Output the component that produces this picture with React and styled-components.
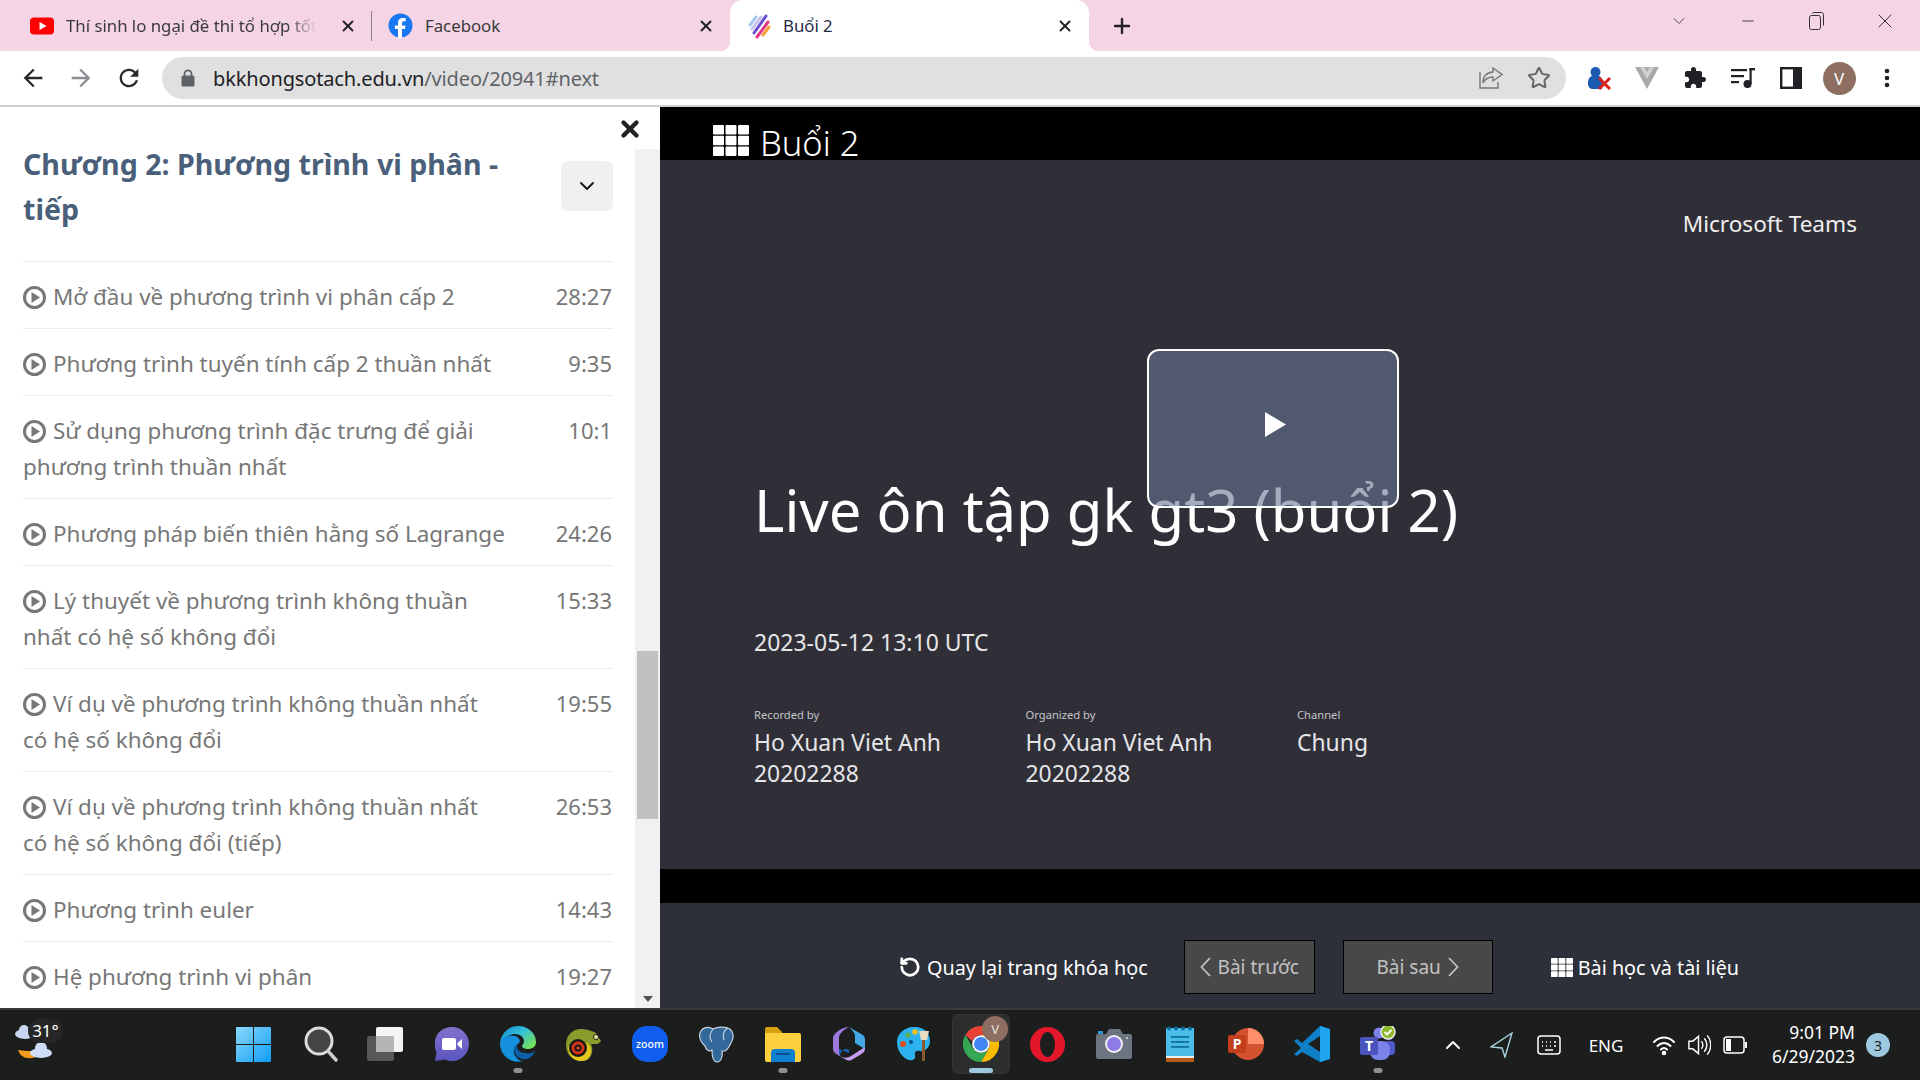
import styled, { createGlobalStyle } from "styled-components";
import { ChevronDown, ChevronUp, X, Plus, Minus, Star, RotateCcw } from "lucide-react";

const FONT = `"Noto Sans", "Open Sans", Arial, sans-serif`;

const GlobalStyle = createGlobalStyle`
  html, body { margin: 0; padding: 0; background: #fff; }
  body { font-family: ${FONT}; width: 1920px; height: 1080px; overflow: hidden; }
  * { box-sizing: border-box; }
`;

const Screen = styled.div`
  width: 1920px;
  height: 1080px;
  display: flex;
  flex-direction: column;
  overflow: hidden;
`;

/* browser chrome */
const TabStrip = styled.div`
  height: 51px;
  background: #f5d5e5;
  display: flex;
  padding-left: 15px;
  align-items: stretch;
`;

const Tab = styled.div`
  position: relative;
  width: ${(p) => p.$w}px;
  display: flex;
  align-items: center;
  padding: 0 15px 0 ${(p) => p.$pad || 15}px;
  gap: 12px;
  font-size: 16.8px;
  color: ${(p) => (p.$active ? "#1f2a44" : "#3a3a3a")};
  background: ${(p) => (p.$active ? "#fff" : "transparent")};
  border-radius: ${(p) => (p.$active ? "13px 13px 0 0" : "0")};
  ${(p) => p.$sep && `
    &::after {
      content: "";
      position: absolute;
      right: 0;
      top: 11px;
      height: 30px;
      width: 1px;
      background: #8a8088;
    }
  `}
  ${(p) => p.$active && `
    &::before, &::after {
      content: "";
      position: absolute;
      bottom: 0;
      width: 10px;
      height: 10px;
    }
    &::before { left: -10px; background: radial-gradient(circle at 0 0, transparent 10px, #fff 10.5px); }
    &::after { right: -10px; background: radial-gradient(circle at 100% 0, transparent 10px, #fff 10.5px); }
  `}
`;

const TabLabel = styled.span`
  flex: 1;
  white-space: nowrap;
`;

const FadedText = styled.span`
  display: inline-block;
  -webkit-mask-image: linear-gradient(90deg, #000 88%, transparent 100%);
  mask-image: linear-gradient(90deg, #000 88%, transparent 100%);
`;

const TabClose = styled.span`
  display: flex;
  color: #222;
`;

const NewTab = styled.div`
  width: 46px;
  margin-left: 10px;
  display: flex;
  align-items: center;
  justify-content: center;
  color: #222;
`;

const WindowControls = styled.div`
  margin-left: auto;
  display: flex;
  align-items: flex-start;
  padding-top: 10px;
  padding-right: 1px;
  color: #333;
`;

const WinButton = styled.span`
  width: 68.5px;
  height: 22px;
  display: flex;
  align-items: center;
  justify-content: center;
`;

const Toolbar = styled.div`
  height: 56px;
  background: #fff;
  border-bottom: 2px solid #cfcfcf;
  display: flex;
  align-items: center;
  padding: 0 9px 0 9px;
`;

const NavButton = styled.span`
  width: 48px;
  display: flex;
  justify-content: center;
  color: ${(p) => (p.$muted ? "#8a8d91" : "#2a2a2a")};
`;

const Address = styled.div`
  width: 1404px;
  margin-left: 9px;
  height: 42px;
  border-radius: 21px;
  background: #e0e0e0;
  display: flex;
  align-items: center;
  padding: 0 3px 0 19px;
  font-size: 20px;
  color: #5f6368;
`;

const Url = styled.span`
  margin-left: 18px;
  flex: 1;
  letter-spacing: -0.14px;
  b { font-weight: 400; color: #202124; }
`;

const AddressAction = styled.span`
  width: 48px;
  display: flex;
  justify-content: center;
  color: #666;
`;

const Extensions = styled.div`
  display: flex;
  align-items: center;
  margin-left: 9px;
`;

const ExtSlot = styled.span`
  width: 48px;
  display: flex;
  justify-content: center;
`;

const Avatar = styled.span`
  width: 33px;
  height: 33px;
  border-radius: 50%;
  background: #8d6e60;
  color: #fff;
  font-size: 17px;
  display: flex;
  align-items: center;
  justify-content: center;
`;

/* page */
const Page = styled.div`
  flex: 1;
  display: flex;
  min-height: 0;
`;

const Sidebar = styled.aside`
  position: relative;
  width: 660px;
  background: #fff;
  display: flex;
  overflow: hidden;
`;

const CloseBar = styled.div`
  position: absolute;
  left: 0;
  top: 0;
  width: 660px;
  height: 42px;
  z-index: 1;
  display: flex;
  justify-content: flex-end;
  padding: 9px 17px 0 0;
  color: #222;
`;

const ListPane = styled.div`
  width: 635px;
  padding: 34px 22px 0 23px;
  position: relative;
`;

const ChapterHead = styled.div`
  display: flex;
  align-items: flex-start;
  justify-content: space-between;
  padding-bottom: 30px;
  position: relative;
  z-index: 2;
`;

const ChapterTitle = styled.h2`
  margin: 0;
  width: 500px;
  font-size: 28.6px;
  line-height: 45px;
  font-weight: 700;
  color: #4a5f7a;
`;

const Toggle = styled.span`
  width: 52px;
  height: 50px;
  margin-top: 20px;
  border-radius: 6px;
  background: #f0f0f0;
  display: flex;
  align-items: center;
  justify-content: center;
  color: #111;
`;

const Row = styled.div`
  display: flex;
  justify-content: space-between;
  border-top: 1px solid #ececec;
  padding: 16px 1px 14px 0;
  font-size: 22px;
  line-height: 36px;
  color: #777;
`;

const RowTitle = styled.span`
  white-space: pre-line;
  font-size: 22.45px;
  margin: 1px 0 -1px;
  svg { vertical-align: -4px; margin-right: 7px; }
`;

const RowTime = styled.span`
  white-space: nowrap;
`;

const Track = styled.div`
  width: 25px;
  margin-top: 42px;
  background: #f1f1f1;
  display: flex;
  flex-direction: column;
  align-items: center;
  padding-bottom: 6px;
`;

const Thumb = styled.div`
  width: 21px;
  height: 168px;
  margin-top: 502px;
  background: #c1c1c1;
`;

const TrackArrow = styled.div`
  margin-top: auto;
  width: 0;
  height: 0;
  border-left: 5px solid transparent;
  border-right: 5px solid transparent;
  border-top: 6px solid #505050;
`;

const Player = styled.main`
  flex: 1;
  display: flex;
  flex-direction: column;
  background: #000;
`;

const PlayerTitle = styled.div`
  height: 53px;
  padding: 18px 0 0 53px;
  display: flex;
  gap: 11px;
  align-items: flex-start;
  color: #fff;
  font-size: 34.5px;
  line-height: 36px;
  font-weight: 300;
`;

const Stage = styled.section`
  position: relative;
  height: 709px;
  background: #302f38;
  color: #f4f4f6;
  padding: 49px 63px 0 94px;
  display: flex;
  flex-direction: column;
`;

const Brand = styled.div`
  align-self: flex-end;
  font-size: 22.6px;
  line-height: 30px;
  color: #eee;
`;

const Title = styled.h1`
  margin: 233px 0 0;
  font-size: 58px;
  line-height: 76px;
  font-weight: 400;
  color: #fff;
  white-space: nowrap;
`;

const DateLine = styled.div`
  margin-top: 79px;
  font-size: 23px;
  line-height: 30px;
  color: #e6e6e8;
`;

const Meta = styled.div`
  margin-top: 50px;
  display: grid;
  grid-template-columns: 271.5px 271.5px 200px;
`;

const MetaLabel = styled.div`
  font-size: 11.2px;
  line-height: 16px;
  color: #c4c4c8;
`;

const MetaValue = styled.div`
  margin-top: 4px;
  font-size: 22.9px;
  line-height: 31px;
  white-space: pre-line;
  color: #e6e6e8;
`;

const PlayOverlay = styled.div`
  position: absolute;
  left: 487px;
  top: 189px;
  width: 252px;
  height: 159px;
  border: 2px solid #fff;
  border-radius: 12px;
  background: rgba(103, 119, 146, 0.6);
  display: flex;
  align-items: center;
  justify-content: center;
  padding: 0 0 8px 5px;
`;

const BlackStrip = styled.div`
  height: 34px;
  background: #000;
`;

const LessonBar = styled.nav`
  height: 105px;
  background: #2d3039;
  display: flex;
  align-items: flex-start;
  padding: 37px 0 0 239px;
  font-size: 19.8px;
  color: #fff;
`;

const LessonLink = styled.span`
  display: flex;
  align-items: center;
  gap: ${(p) => p.$gap || 5}px;
  height: 54px;
  margin-left: ${(p) => p.$ml || 0}px;
`;

const LessonButton = styled.span`
  width: ${(p) => p.$w}px;
  height: 54px;
  margin-left: ${(p) => p.$ml}px;
  display: flex;
  align-items: center;
  justify-content: center;
  gap: 7px;
  font-size: 19px;
  background: #484848;
  border: 1px solid #000;
  color: #c2c2c2;
`;

/* taskbar */
const Taskbar = styled.footer`
  height: 72px;
  background: #1c1e1d;
  border-top: 2px solid #3a3b3d;
  display: flex;
  color: #fff;
`;

const Weather = styled.div`
  position: relative;
  width: 220px;
  padding: 14px 0 0 14px;
`;

const TempChip = styled.span`
  position: absolute;
  left: 28px;
  top: 9px;
  width: 35px;
  height: 24px;
  border-radius: 12px;
  background: #262626;
  font-size: 17px;
  line-height: 24px;
  text-align: center;
`;

const Apps = styled.div`
  display: flex;
`;

const AppSlot = styled.span`
  position: relative;
  width: 66.2px;
  display: flex;
  align-items: center;
  justify-content: center;
  padding-bottom: 2px;
  ${(p) => p.$active && `
    &::before {
      content: "";
      position: absolute;
      left: 4px;
      right: 4px;
      top: 4px;
      bottom: 6px;
      background: #2c2e2e;
      border: 1px solid #343636;
      border-radius: 6px;
    }
  `}
  svg { position: relative; }
`;

const RunDot = styled.i`
  position: absolute;
  bottom: 7px;
  left: 50%;
  transform: translateX(-50%);
  width: ${(p) => (p.$active ? 24 : 9)}px;
  height: 5px;
  border-radius: 3px;
  background: ${(p) => (p.$active ? "#9cc8e0" : "#8f8f8f")};
`;

const Tray = styled.div`
  margin-left: auto;
  display: flex;
  align-items: center;
  padding-right: 30px;
`;

const TraySlot = styled.span`
  width: ${(p) => p.$w}px;
  display: flex;
  justify-content: center;
  align-items: center;
  font-size: 17px;
`;

const Clock = styled.div`
  width: 96px;
  text-align: right;
  font-size: 17.5px;
  line-height: 24px;
  padding-bottom: 3px;
  white-space: nowrap;
`;

const Badge = styled.span`
  width: 24px;
  height: 24px;
  margin-left: 11px;
  border-radius: 50%;
  background: #9cc8e0;
  color: #1c1e1d;
  font-size: 14px;
  display: flex;
  align-items: center;
  justify-content: center;
`;

const ChromeBadge = styled.span`
  position: absolute;
  left: 34px;
  top: 6px;
  width: 26px;
  height: 26px;
  border-radius: 50%;
  background: #8d6e60;
  color: #e8e0dc;
  font-size: 13px;
  display: flex;
  align-items: center;
  justify-content: center;
`;

/* drawings */
const GridIcon = ({ w, h }) => (
  <svg width={w} height={h} viewBox="0 0 36 31" preserveAspectRatio="none" fill="#fff">
    {[0, 10.75, 21.5].map((y) =>
      [0, 12.5, 25].map((x) => <rect key={`${x}-${y}`} x={x} y={y} width="11" height="9.5" rx="1" />)
    )}
  </svg>
);

const BackIcon = ({ flip }) => (
  <svg width="28" height="28" viewBox="0 0 24 24" fill="currentColor" transform={flip ? "scale(-1 1)" : undefined}>
    <path d="M20 11H7.83l5.59-5.59L12 4l-8 8 8 8 1.41-1.41L7.83 13H20v-2z" />
  </svg>
);

const ReloadIcon = () => (
  <svg width="28" height="28" viewBox="0 0 24 24" fill="currentColor">
    <path d="M17.65 6.35C16.2 4.9 14.21 4 12 4c-4.42 0-7.99 3.58-7.99 8s3.57 8 7.99 8c3.73 0 6.84-2.55 7.73-6h-2.08c-.82 2.33-3.04 4-5.65 4-3.31 0-6-2.69-6-6s2.69-6 6-6c1.66 0 3.14.69 4.22 1.78L13 11h7V4l-2.35 2.35z" />
  </svg>
);

const ThinChevron = ({ right }) => (
  <svg width="11" height="20" viewBox="0 0 11 20" fill="none" stroke="currentColor" strokeWidth="1.8">
    <path d={right ? "M1 1l8.500 9L1 19" : "M10 1L1.500 10l8.500 9"} />
  </svg>
);

const PlayCircle = () => (
  <svg width="23" height="23" viewBox="0 0 23 23">
    <circle cx="11.5" cy="11.5" r="10" fill="none" stroke="#777" strokeWidth="3" />
    <path d="M8.5 6l8.5 5.5-8.5 5.5z" fill="#777" />
  </svg>
);

const YoutubeIcon = () => (
  <svg width="24" height="24" viewBox="0 0 24 24">
    <rect x="0" y="3.5" width="24" height="17" rx="4" fill="#f00" />
    <path d="M9.5 8l7 4-7 4z" fill="#fff" />
  </svg>
);

const FacebookIcon = () => (
  <svg width="25" height="25" viewBox="0 0 25 25">
    <circle cx="12.5" cy="12.5" r="12" fill="#1877f2" />
    <path d="M14 25v-9h3l.6-3.6H14v-2.2c0-1 .5-1.9 2-1.9h1.7V5.2S16.2 5 14.7 5c-2.9 0-4.7 1.8-4.7 4.8v2.6H6.9V16H10v9z" fill="#fff" />
  </svg>
);

const SiteIcon = () => (
  <svg width="24" height="26" viewBox="0 0 24 26" fill="none" strokeLinecap="round">
    <path d="M14 4L5 16" stroke="#c9c4e8" strokeWidth="3" />
    <path d="M19 3L7 20" stroke="#6a4bd0" strokeWidth="3" />
    <path d="M21 9L10 24" stroke="#e8388a" strokeWidth="3" />
    <path d="M22 14L16 22" stroke="#f6a13a" strokeWidth="3" />
    <path d="M9 4L3 12" stroke="#a8c6ee" strokeWidth="3" />
  </svg>
);

const LockIcon = () => (
  <svg width="14" height="18" viewBox="0 0 14 18">
    <path d="M3.5 7V4.8a3.5 3.5 0 017 0V7" fill="none" stroke="#5f6368" strokeWidth="1.8" />
    <rect x="0.5" y="6.5" width="13" height="11" rx="1.5" fill="#5f6368" />
  </svg>
);

const ShareIcon = () => (
  <svg width="24" height="22" viewBox="0 0 24 22" fill="none" stroke="#777" strokeWidth="1.4">
    <path d="M1 5v16h18v-6" />
    <path d="M14 1l9 6.5-9 6.5v-4c-5 0-8 2-10 6 0-6 3-10.5 10-11z" />
  </svg>
);

const PersonOff = () => (
  <svg width="24" height="24" viewBox="0 0 24 24">
    <circle cx="8.5" cy="6" r="5" fill="#1a5bb0" />
    <path d="M1 17c0-5 3-8 7-8s6 2 7 4v10H6c-3 0-5-2-5-6z" fill="#1a5bb0" />
    <path d="M12 12l11 11M23 12L12 23" stroke="#d8201c" strokeWidth="3" />
  </svg>
);

const VueIcon = () => (
  <svg width="24" height="22" viewBox="0 0 24 22">
    <path d="M0 0h24L12 22z" fill="#a9a9a9" />
    <path d="M5 0h4l3 5 3-5h4l-7 12z" fill="#d0d0d0" />
  </svg>
);

const PuzzleIcon = () => (
  <svg width="24" height="24" viewBox="0 0 24 24" fill="#202124">
    <path d="M20.5 11H19V7c0-1.1-.9-2-2-2h-4V3.5C13 2.12 11.88 1 10.5 1S8 2.12 8 3.5V5H4c-1.1 0-1.99.9-1.99 2v3.8H3.5c1.49 0 2.7 1.21 2.7 2.7s-1.21 2.7-2.7 2.7H2V20c0 1.1.9 2 2 2h3.8v-1.5c0-1.49 1.21-2.7 2.7-2.7 1.49 0 2.7 1.21 2.7 2.7V22H17c1.1 0 2-.9 2-2v-4h1.5c1.38 0 2.5-1.12 2.5-2.5S21.88 11 20.5 11z" />
  </svg>
);

const QueueIcon = () => (
  <svg width="24" height="22" viewBox="0 0 24 22" fill="#202124">
    <rect x="0" y="2" width="16" height="2.2" />
    <rect x="0" y="8" width="13" height="2.2" />
    <rect x="0" y="14" width="8" height="2.2" />
    <rect x="18.5" y="1" width="2.2" height="16" />
    <rect x="18.5" y="1" width="5.5" height="2.4" />
    <circle cx="16.5" cy="17" r="4" />
  </svg>
);

const PanelIcon = () => (
  <svg width="22" height="22" viewBox="0 0 22 22">
    <rect x="1.2" y="1.2" width="19.6" height="19.6" fill="none" stroke="#202124" strokeWidth="2.4" />
    <rect x="13" y="1" width="8" height="20" fill="#202124" />
  </svg>
);

const DotsIcon = () => (
  <svg width="6" height="20" viewBox="0 0 6 20" fill="#202124">
    <circle cx="3" cy="3" r="2.3" />
    <circle cx="3" cy="10" r="2.3" />
    <circle cx="3" cy="17" r="2.3" />
  </svg>
);

const WeatherIcon = () => (
  <svg width="38" height="48" viewBox="0 0 38 48">
    <ellipse cx="11" cy="10" rx="10" ry="5" fill="#c9d6f2" />
    <circle cx="10" cy="6" r="5" fill="#c9d6f2" />
    <path d="M4 26c2 6 7 9 14 8 7-1 11-6 12-10-4 3-6 3-10 3s-10 0-16-1z" fill="#f39a1c" />
    <ellipse cx="27" cy="29" rx="11" ry="5" fill="#cfdcf5" />
    <circle cx="27" cy="24" r="6" fill="#cfdcf5" />
  </svg>
);

const WinIcon = () => (
  <svg width="35" height="35" viewBox="0 0 35 35">
    <defs>
      <linearGradient id="wg" x1="0" y1="0" x2="1" y2="1">
        <stop offset="0" stopColor="#8ad8fb" />
        <stop offset="1" stopColor="#0f9cf6" />
      </linearGradient>
    </defs>
    <path d="M0 1a1 1 0 011-1h16v17H0zM18 0h16a1 1 0 011 1v16H18zM0 18h17v17H1a1 1 0 01-1-1zM18 18h17v16a1 1 0 01-1 1H18z" fill="url(#wg)" />
  </svg>
);

const SearchIcon = () => (
  <svg width="38" height="36" viewBox="-4 0 38 36">
    <circle cx="15" cy="15" r="13" fill="#444" stroke="#ddd" strokeWidth="3" />
    <path d="M24 25l8 9" stroke="#ccc" strokeWidth="3.4" strokeLinecap="round" />
  </svg>
);

const TaskViewIcon = () => (
  <svg width="36" height="34" viewBox="0 0 36 34">
    <rect x="0" y="9" width="27" height="25" rx="2" fill="#575757" />
    <rect x="9" y="0" width="27" height="25" rx="2" fill="#f4f4f4" />
    <rect x="9" y="9" width="18" height="16" fill="#b5b5b5" />
  </svg>
);

const MeetIcon = () => (
  <svg width="34" height="34" viewBox="0 0 34 34">
    <defs>
      <linearGradient id="mg" x1="0" y1="0" x2="0" y2="1">
        <stop offset="0" stopColor="#8272cc" />
        <stop offset="1" stopColor="#5a55bf" />
      </linearGradient>
    </defs>
    <path d="M17 0a17 17 0 110 34c-2.500 0-5-.5-7-1.500L0 34l1.500-9A17 17 0 0117 0z" fill="url(#mg)" />
    <rect x="7" y="11" width="14" height="12" rx="2" fill="#fff" />
    <path d="M22.500 16l4.500-4v10l-4.500-4z" fill="#fff" />
  </svg>
);

const EdgeIcon = () => (
  <svg width="36" height="36" viewBox="0 0 36 36">
    <defs>
      <linearGradient id="eg" x1="0" y1="0" x2="1" y2="0.7">
        <stop offset="0" stopColor="#0f8bd6" />
        <stop offset="0.55" stopColor="#35c1d8" />
        <stop offset="1" stopColor="#74e05a" />
      </linearGradient>
    </defs>
    <path d="M18 0c10 0 18 7 18 16 0 5-4 7-8 7-3 0-6-1-6-3 0-1 2-2 2-5 0-4-4-7-9-7C8 8 2 13 0 17 1 8 8 0 18 0z" fill="url(#eg)" />
    <path d="M0 17c2-6 8-9 15-7 5 1 6 6 3 8-5 3-6 9-1 14 1 2 4 3 6 3C11 38 0 30 0 17z" fill="#1590dc" />
    <path d="M14 22c0 8 6 12 13 11 3-1 7-4 8-8-3 2-6 3-10 2-5 0-8-3-8-7-2 0-3 1-3 2z" fill="#0c5fa8" />
  </svg>
);

const ChameleonIcon = () => (
  <svg width="36" height="33" viewBox="0 0 36 33">
    <path d="M0 17C0 6 8 0 17 1c6 1 10 2 13 4l5 8-3 3-7 0c3 6 1 17-9 17C7 33 0 27 0 17z" fill="#8a9a2c" />
    <path d="M2 20c1 8 6 13 13 13 7 0 10-5 10-10 0-5-3-9-8-9-7 0-13 1-15 6z" fill="#e4c81e" />
    <circle cx="12" cy="20" r="9" fill="#181818" />
    <circle cx="12" cy="20" r="6.500" fill="#d8331a" />
    <circle cx="12" cy="20" r="3.500" fill="#181818" />
    <circle cx="12" cy="20" r="1.500" fill="#e85a20" />
    <circle cx="30" cy="9" r="2.500" fill="#e6e6a0" stroke="#222" />
  </svg>
);

const ZoomIcon = () => (
  <svg width="36" height="36" viewBox="0 0 36 36">
    <rect width="36" height="36" rx="15" fill="#0f5ef0" />
    <text x="18" y="21.500" fontSize="10.500" fontFamily="Noto Sans, sans-serif" textAnchor="middle" fill="#fff" fontWeight="500">zoom</text>
  </svg>
);

const PostgresIcon = () => (
  <svg width="36" height="37" viewBox="0 0 36 37">
    <path d="M2 7C4 1 11 0 15 3c4-2 12-3 17 0 4 4 4 9 1 14-2 4-4 7-6 8h-3c1 5-1 11-5 11-4 0-5-6-5-12-3 2-6 0-7-4C5 18 0 13 2 7z" fill="#33689a" stroke="#c8d2dc" strokeWidth="1.200" />
    <path d="M15 3c-3 4-4 9-1 13M30 2c-4 2-6 7-4 12" fill="none" stroke="#c8d2dc" strokeWidth="1.200" />
  </svg>
);

const FolderIcon = () => (
  <svg width="36" height="35" viewBox="0 0 36 35">
    <path d="M0 2a2 2 0 012-2h10l5 5v5H0z" fill="#d7a00f" />
    <path d="M0 6h34a2 2 0 012 2v25a2 2 0 01-2 2H2a2 2 0 01-2-2z" fill="#fdd13e" />
    <path d="M6 35V26a4 4 0 014-4h16a4 4 0 014 4v9z" fill="#0f7fd0" />
    <rect x="11" y="26" width="14" height="2" rx="1" fill="#064f8c" />
  </svg>
);

const HubIcon = () => (
  <svg width="32" height="34" viewBox="0 0 32 34">
    <path d="M16 0l14 8c1 1 2 2 2 4v10l-10-6V9c0-3-3-6-6-9z" fill="#42a8e6" />
    <path d="M16 0C10 0 4 4 2 7 0 9 0 10 0 12v10c0 3 2 4 5 6l3 2c-2-3-2-5-2-8V11c0-4 4-8 10-11z" fill="#9a78dc" />
    <path d="M32 22l-1 3c-1 1-3 2-4 3l-7 4c-3 2-5 2-8 0-2-1-4-2-4-2 4 1 7 1 10-1l14-9z" fill="#c49cf0" />
    <path d="M6 22c0 3 0 6 2 8-2-2 0-6 4-8l4-2v6z" fill="#1c62b8" />
    <circle cx="16" cy="17" r="5.500" fill="#1c1e1d" />
  </svg>
);

const PaintIcon = () => (
  <svg width="36" height="34" viewBox="0 0 36 34">
    <path d="M15 0c9-1 18 4 18 14 0 8-7 11-10 10-3-1-6 0-5 4 1 4-2 6-6 5C5 31 0 23 0 15 0 7 7 1 15 0z" fill="#2bb2ee" />
    <circle cx="11" cy="8" r="2.600" fill="#60b04a" />
    <circle cx="18" cy="5" r="2.800" fill="#f2c020" />
    <circle cx="6" cy="17" r="3" fill="#e0501f" />
    <circle cx="14" cy="15" r="2" fill="#0c4f88" />
    <rect x="25" y="12" width="3" height="22" fill="#8a5a2c" />
    <path d="M22 4h10l-2 9h-6z" fill="#e8dcc0" />
  </svg>
);

const ChromeIcon = () => (
  <svg width="36" height="36" viewBox="0 0 36 36">
    <path d="M18 0a18 18 0 0115.600 9H18a9 9 0 00-8.600 6.300L2.400 9A18 18 0 0118 0z" fill="#ea4335" />
    <path d="M33.600 9A18 18 0 0118 36l7.800-13.500A9 9 0 0025.800 13.500L18 9z" fill="#fbbc04" />
    <path d="M18 36A18 18 0 012.400 9l7.800 13.500A9 9 0 0025.800 22.500z" fill="#34a853" />
    <circle cx="18" cy="18" r="8.800" fill="#fff" />
    <circle cx="18" cy="18" r="7" fill="#4285f4" />
  </svg>
);

const OperaIcon = () => (
  <svg width="35" height="35" viewBox="0 0 35 35">
    <circle cx="17.500" cy="17.500" r="17.500" fill="#e3162a" />
    <ellipse cx="17.500" cy="17.500" rx="7.500" ry="12.500" fill="#1c1e1d" />
  </svg>
);

const CameraIcon = () => (
  <svg width="36" height="30" viewBox="0 0 36 30">
    <rect y="5" width="36" height="25" rx="2" fill="#6b7480" />
    <path d="M10 5l3-5h11l3 5z" fill="#6b7480" />
    <rect x="2" y="2" width="5" height="3" fill="#2f97d8" />
    <circle cx="18" cy="15" r="9" fill="#f0f0f0" />
    <circle cx="18" cy="15" r="7" fill="#8f7be8" />
    <circle cx="31" cy="9" r="1" fill="#ddd" />
  </svg>
);

const NotepadIcon = () => (
  <svg width="28" height="36" viewBox="0 0 28 36">
    <rect y="2" width="28" height="30" fill="#49bce8" />
    <rect y="31" width="28" height="5" fill="#b85c18" />
    <rect y="30" width="28" height="2" fill="#eee" />
    {[3, 10, 17, 24].map((x) => <circle key={x} cx={x} cy="2.500" r="2" fill="#0f6f9f" />)}
    {[10, 15, 20].map((y) => <rect key={y} x="5" y={y} width="18" height="1.800" fill="#0f6f9f" />)}
  </svg>
);

const PowerPointIcon = () => (
  <svg width="36" height="32" viewBox="0 0 36 32">
    <circle cx="20" cy="16" r="16" fill="#d35230" />
    <path d="M20 0a16 16 0 0116 16H20z" fill="#ff8f6b" />
    <rect y="7" width="18" height="18" rx="2" fill="#c43e1c" />
    <text x="9" y="21" fontSize="14" fontWeight="700" fontFamily="Noto Sans, sans-serif" textAnchor="middle" fill="#fff">P</text>
  </svg>
);

const VscodeIcon = () => (
  <svg width="36" height="36" viewBox="0 0 36 36">
    <path d="M26 0L8 17l-5-4-3 2 7 7-7 6 3 2 5-4 18 10 10-3V3z" fill="#0f7fc8" />
    <path d="M26 0l10 3v30l-10 3zM26 10L14 18l12 8z" fill="#20a4ee" />
    <path d="M26 10L14 18l12 8z" fill="#1c1e1d" />
  </svg>
);

const TeamsIcon = () => (
  <svg width="36" height="36" viewBox="0 0 36 36">
    <circle cx="19" cy="7" r="5.500" fill="#7b83eb" />
    <circle cx="29" cy="10" r="4" fill="#5059c9" />
    <rect x="24" y="15" width="11" height="14" rx="4" fill="#5059c9" />
    <rect x="10" y="15" width="20" height="19" rx="8" fill="#7b83eb" />
    <rect y="11" width="18" height="18" rx="2" fill="#4b53bc" />
    <text x="9" y="25" fontSize="14" fontWeight="700" fontFamily="Noto Sans, sans-serif" textAnchor="middle" fill="#fff">T</text>
    <circle cx="28" cy="6" r="7" fill="#8db72c" stroke="#eee" strokeWidth="1.500" />
    <path d="M24.500 6l2.500 2.500 4.500-4.500" fill="none" stroke="#fff" strokeWidth="1.800" />
  </svg>
);

const NearbyIcon = () => (
  <svg width="24" height="26" viewBox="0 0 24 26" fill="none" stroke="#a8d4e4" strokeWidth="1.400">
    <path d="M22 1L1 15l11 1 3 9z" />
  </svg>
);

const KeyboardIcon = () => (
  <svg width="24" height="20" viewBox="0 0 24 20" fill="none" stroke="#fff" strokeWidth="1.500">
    <rect x="1" y="1" width="22" height="18" rx="3" />
    <path d="M5 7h1M9 7h1M13 7h1M17 7h2M5 11h1M9 11h1M13 11h1M17 11h2M8 15h8" strokeWidth="1.700" />
  </svg>
);

const WifiIcon = () => (
  <svg width="24" height="22" viewBox="0 0 24 22" fill="none" stroke="#fff" strokeWidth="2" strokeLinecap="round">
    <path d="M2 8c6-6 14-6 20 0M5.500 12c4-4 9-4 13 0M9 15.500c2-2 4-2 6 0" />
    <circle cx="12" cy="19" r="1.300" fill="#fff" />
  </svg>
);

const VolumeIcon = () => (
  <svg width="25" height="24" viewBox="0 0 25 24" fill="none" stroke="#fff" strokeWidth="1.500">
    <path d="M2 8h4l6-5v18l-6-5H2z" />
    <path d="M15 8c2 2 2 6 0 8M18 5c3.500 4 3.500 10 0 14M21 2c5 6 5 14 0 20" />
  </svg>
);

const BatteryIcon = () => (
  <svg width="24" height="18" viewBox="0 0 24 18">
    <rect x="1" y="1" width="20" height="16" rx="3" fill="none" stroke="#fff" strokeWidth="1.500" />
    <rect x="3" y="3" width="5" height="12" fill="#fff" />
    <rect x="22" y="6" width="2" height="6" fill="#fff" />
  </svg>
);

const lessons = [
  { title: "Mở đầu về phương trình vi phân cấp 2", time: "28:27" },
  { title: "Phương trình tuyến tính cấp 2 thuần nhất", time: "9:35" },
  { title: "Sử dụng phương trình đặc trưng để giải\nphương trình thuần nhất", time: "10:1" },
  { title: "Phương pháp biến thiên hằng số Lagrange", time: "24:26" },
  { title: "Lý thuyết về phương trình không thuần\nnhất có hệ số không đổi", time: "15:33" },
  { title: "Ví dụ về phương trình không thuần nhất\ncó hệ số không đổi", time: "19:55" },
  { title: "Ví dụ về phương trình không thuần nhất\ncó hệ số không đổi (tiếp)", time: "26:53" },
  { title: "Phương trình euler", time: "14:43" },
  { title: "Hệ phương trình vi phân", time: "19:27" },
];

const apps = [
  { id: "win", icon: <WinIcon /> },
  { id: "search", icon: <SearchIcon /> },
  { id: "view", icon: <TaskViewIcon /> },
  { id: "meet", icon: <MeetIcon /> },
  { id: "edge", icon: <EdgeIcon />, running: true },
  { id: "gimp", icon: <ChameleonIcon /> },
  { id: "zoom", icon: <ZoomIcon /> },
  { id: "pg", icon: <PostgresIcon /> },
  { id: "folder", icon: <FolderIcon />, running: true },
  { id: "hub", icon: <HubIcon /> },
  { id: "paint", icon: <PaintIcon /> },
  { id: "chrome", icon: <ChromeIcon />, active: true },
  { id: "opera", icon: <OperaIcon /> },
  { id: "camera", icon: <CameraIcon /> },
  { id: "notepad", icon: <NotepadIcon /> },
  { id: "ppt", icon: <PowerPointIcon /> },
  { id: "code", icon: <VscodeIcon /> },
  { id: "teams", icon: <TeamsIcon />, running: true },
];

export default function App() {
  return (
    <Screen>
      <GlobalStyle />
      <TabStrip>
        <Tab $w={357} $sep>
          <YoutubeIcon />
          <TabLabel><FadedText>Thí sinh lo ngại đề thi tổ hợp tốt</FadedText></TabLabel>
          <TabClose><X size={18} strokeWidth={2.5} /></TabClose>
        </Tab>
        <Tab $w={358} $pad={16}>
          <FacebookIcon />
          <TabLabel>Facebook</TabLabel>
          <TabClose><X size={18} strokeWidth={2.5} /></TabClose>
        </Tab>
        <Tab $w={359} $active $pad={17}>
          <SiteIcon />
          <TabLabel>Buổi 2</TabLabel>
          <TabClose><X size={18} strokeWidth={2.5} /></TabClose>
        </Tab>
        <NewTab><Plus size={24} strokeWidth={2.4} /></NewTab>
        <WindowControls>
          <WinButton><ChevronDown size={20} strokeWidth={1} /></WinButton>
          <WinButton><Minus size={18} strokeWidth={1.2} /></WinButton>
          <WinButton>
            <svg width="15" height="18" viewBox="0 0 15 18" fill="none" stroke="#333">
              <rect x="0.5" y="3.500" width="11" height="14" rx="2" />
              <path d="M3.500 1.500c0-.5.5-1 1-1h8c1 0 2 1 2 2v11" />
            </svg>
          </WinButton>
          <WinButton><X size={24} strokeWidth={1} /></WinButton>
        </WindowControls>
      </TabStrip>

      <Toolbar>
        <NavButton><BackIcon /></NavButton>
        <NavButton $muted><BackIcon flip /></NavButton>
        <NavButton><ReloadIcon /></NavButton>
        <Address>
          <LockIcon />
          <Url><b>bkkhongsotach.edu.vn</b>/video/20941#next</Url>
          <AddressAction><ShareIcon /></AddressAction>
          <AddressAction><Star size={24} strokeWidth={2} /></AddressAction>
        </Address>
        <Extensions>
          <ExtSlot><PersonOff /></ExtSlot>
          <ExtSlot><VueIcon /></ExtSlot>
          <ExtSlot><PuzzleIcon /></ExtSlot>
          <ExtSlot><QueueIcon /></ExtSlot>
          <ExtSlot><PanelIcon /></ExtSlot>
          <ExtSlot><Avatar>V</Avatar></ExtSlot>
          <ExtSlot><DotsIcon /></ExtSlot>
        </Extensions>
      </Toolbar>

      <Page>
        <Sidebar>
          <CloseBar><X size={26} strokeWidth={4} /></CloseBar>
          <ListPane>
            <ChapterHead>
              <ChapterTitle>Chương 2: Phương trình vi phân - tiếp</ChapterTitle>
              <Toggle><ChevronDown size={24} strokeWidth={1.8} /></Toggle>
            </ChapterHead>
            {lessons.map((l) => (
              <Row key={l.title + l.time}>
                <RowTitle><PlayCircle />{l.title}</RowTitle>
                <RowTime>{l.time}</RowTime>
              </Row>
            ))}
          </ListPane>
          <Track>
            <Thumb />
            <TrackArrow />
          </Track>
        </Sidebar>

        <Player>
          <PlayerTitle>
            <GridIcon w={36} h={31} />
            <span>Buổi 2</span>
          </PlayerTitle>
          <Stage>
            <Brand>Microsoft Teams</Brand>
            <Title>Live ôn tập gk gt3 (buổi 2)</Title>
            <DateLine>2023-05-12 13:10 UTC</DateLine>
            <Meta>
              <div>
                <MetaLabel>Recorded by</MetaLabel>
                <MetaValue>{"Ho Xuan Viet Anh\n20202288"}</MetaValue>
              </div>
              <div>
                <MetaLabel>Organized by</MetaLabel>
                <MetaValue>{"Ho Xuan Viet Anh\n20202288"}</MetaValue>
              </div>
              <div>
                <MetaLabel>Channel</MetaLabel>
                <MetaValue>Chung</MetaValue>
              </div>
            </Meta>
            <PlayOverlay>
              <svg width="21" height="25" viewBox="0 0 21 25"><path d="M0 0l21 12.500L0 25z" fill="#fff" /></svg>
            </PlayOverlay>
          </Stage>
          <BlackStrip />
          <LessonBar>
            <LessonLink $gap={6}><RotateCcw size={22} strokeWidth={3} />Quay lại trang khóa học</LessonLink>
            <LessonButton $w={131} $ml={36}><ThinChevron />Bài trước</LessonButton>
            <LessonButton $w={150} $ml={28}>Bài sau<ThinChevron right /></LessonButton>
            <LessonLink $ml={58}><GridIcon w={22} h={19} />Bài học và tài liệu</LessonLink>
          </LessonBar>
        </Player>
      </Page>

      <Taskbar>
        <Weather>
          <WeatherIcon />
          <TempChip>31°</TempChip>
        </Weather>
        <Apps>
          {apps.map((a) => (
            <AppSlot key={a.id} $active={a.active}>
              {a.icon}
              {a.active && <ChromeBadge>V</ChromeBadge>}
              {(a.running || a.active) && <RunDot $active={a.active} />}
            </AppSlot>
          ))}
        </Apps>
        <Tray>
          <TraySlot $w={48}><ChevronUp size={24} strokeWidth={2} /></TraySlot>
          <TraySlot $w={50}><NearbyIcon /></TraySlot>
          <TraySlot $w={44}><KeyboardIcon /></TraySlot>
          <TraySlot $w={70}>ENG</TraySlot>
          <TraySlot $w={46}><WifiIcon /></TraySlot>
          <TraySlot $w={24}><VolumeIcon /></TraySlot>
          <TraySlot $w={48}><BatteryIcon /></TraySlot>
          <Clock>9:01 PM<br />6/29/2023</Clock>
          <Badge>3</Badge>
        </Tray>
      </Taskbar>
    </Screen>
  );
}
